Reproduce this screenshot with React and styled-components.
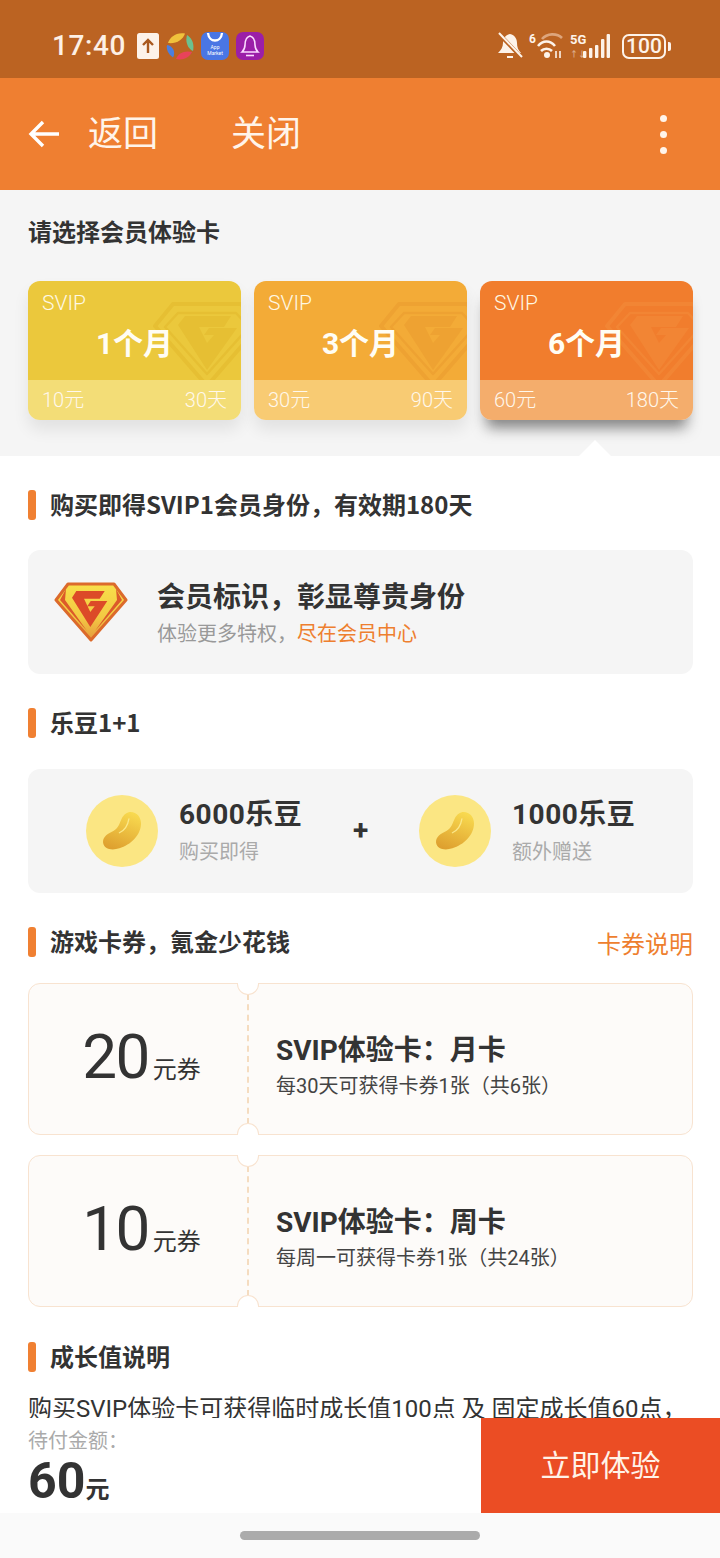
import React from "react";
import styled, { createGlobalStyle } from "styled-components";

const GlobalStyle = createGlobalStyle`
  html, body {
    margin: 0;
    padding: 0;
    background: #fff;
  }
  * {
    box-sizing: border-box;
  }
  body {
    font-family: Roboto, "Noto Sans CJK SC", sans-serif;
  }
`;

const plans = [
  { id: 1, length: "1个月", price: "10元", days: "30天", top: "#ebc83c", bottom: "#f3dd77", mark: "#e6bf33" },
  { id: 3, length: "3个月", price: "30元", days: "90天", top: "#f3ab37", bottom: "#f8cb73", mark: "#eea232" },
  { id: 6, length: "6个月", price: "60元", days: "180天", top: "#f17d2d", bottom: "#f4ad6c", mark: "#f28534", active: true },
];

const beans = [
  { amount: "6000乐豆", note: "购买即得" },
  { amount: "1000乐豆", note: "额外赠送" },
];

const coupons = [
  { value: "20", name: "SVIP体验卡：月卡", desc: "每30天可获得卡券1张（共6张）" },
  { value: "10", name: "SVIP体验卡：周卡", desc: "每周一可获得卡券1张（共24张）" },
];

const GemMark = ({ color }) => (
  <WatermarkSvg viewBox="0 0 108 86" fill="none">
    <path d="M20 2H88L106 24L54 84L2 24Z" stroke={color} strokeWidth="4" strokeLinejoin="round" />
    <path d="M25 11H83L96 25L54 72L12 25Z" stroke={color} strokeWidth="2.5" strokeLinejoin="round" />
    <path d="M32 14H78L71 25H46L54 41L61 33H51L56 26H84L54 68L25 23Z" fill={color} />
  </WatermarkSvg>
);

const GemLogo = () => (
  <svg width="74" height="60" viewBox="0 0 74 60">
    <defs>
      <linearGradient id="gemFill" x1="0" y1="0" x2="0" y2="1">
        <stop offset="0" stopColor="#f8e04a" />
        <stop offset="0.6" stopColor="#f3c843" />
        <stop offset="1" stopColor="#e59a3e" />
      </linearGradient>
    </defs>
    <path d="M14 2H60L72 18L37 58L2 18Z" fill="url(#gemFill)" stroke="#dc6a2b" strokeWidth="3" strokeLinejoin="round" />
    <path d="M12 7L6 18L33 49L11 18Z" fill="#dc5a2a" />
    <path d="M62 7L68 18L41 49L63 18Z" fill="#dc5a2a" />
    <path d="M22.3 9H50.7L45.7 16.7H30L36.3 30L40.7 24.3H33.3L36.7 19H53.3L36.3 45L18 15.7Z" fill="#dc4a28" />
  </svg>
);

const BeanIcon = ({ id }) => (
  <BeanCircle>
    <svg width="38" height="38" viewBox="0 0 44 44">
      <defs>
        <linearGradient id={id} x1="0.7" y1="0" x2="0.3" y2="1">
          <stop offset="0" stopColor="#f8d94f" />
          <stop offset="1" stopColor="#dea02f" />
        </linearGradient>
      </defs>
      <path
        d="M32 0C39 0 44 6 44 13C44 27 32 38 19 42C10 45 1 43 0 35C0 28 6 25 12 22C18 19 19 13 22 7C24 3 28 0 32 0Z"
        fill={`url(#${id})`}
      />
      <path d="M30 8C29 14 26 21 19 24" stroke="#fbe88a" strokeWidth="1.5" fill="none" strokeLinecap="round" />
    </svg>
  </BeanCircle>
);

const StatusLeftIcons = () => (
  <>
    <svg width="22" height="26" viewBox="0 0 22 26">
      <rect width="22" height="26" rx="2.5" fill="#fdf3ea" />
      <path d="M11 20V7M6 12L11 7L16 12" stroke="#a9591f" strokeWidth="2.4" fill="none" />
    </svg>
    <svg width="28" height="28" viewBox="0 0 28 28">
      <path d="M2 11C4 5 10 0 19 1.5C17 8 10 12 2 11Z" fill="#f0c23c" />
      <path d="M21 3C26 6 28.5 12 27 19C22 17 19 10 21 3Z" fill="#6cc08f" />
      <path d="M26 20C23 26 17 28.5 10 27C12 21 19 18 26 20Z" fill="#e8435a" />
      <path d="M7 25.5C2 22 0 17 1 13C7 14 10 20 7 25.5Z" fill="#4a7fe0" />
    </svg>
    <AppTile $color="#4a76e4">
      <svg width="28" height="12" viewBox="0 0 28 12">
        <path d="M7 1C8 11 20 11 21 1" stroke="#fff" strokeWidth="2.4" fill="none" />
      </svg>
      <AppTileText>App</AppTileText>
      <AppTileText>Market</AppTileText>
    </AppTile>
    <svg width="28" height="28" viewBox="0 0 28 28">
      <rect width="28" height="28" rx="7" fill="#9b1fa8" />
      <path
        d="M14 4C10 5 9 9 9 13C9 16 8 18 6 20H22C20 18 19 16 19 13C19 9 18 5 14 4Z"
        stroke="#fbdcff"
        strokeWidth="1.6"
        fill="none"
      />
      <path d="M10 23.5H18" stroke="#fbdcff" strokeWidth="1.6" />
    </svg>
  </>
);

const StatusRightIcons = () => (
  <>
    <svg width="26" height="28" viewBox="0 0 26 28">
      <path d="M13 2C8 3 6 7 6 11C6 15 4 18 1 21H24C21 18 20 15 20 11C20 7 18 3 13 2Z" fill="#fdf3ea" />
      <path d="M10 25H16" stroke="#fdf3ea" strokeWidth="2" />
      <path d="M2 2L25 26" stroke="#bb6322" strokeWidth="4" />
      <path d="M2 1L25 25" stroke="#fdf3ea" strokeWidth="2" />
    </svg>
    <WifiWrap>
      <WifiDigit>6</WifiDigit>
      <svg width="26" height="26" viewBox="0 0 26 26" fill="none">
        <path d="M5 6C10 0 20 0 25 5" stroke="#dda57c" strokeWidth="2.6" />
        <path d="M1 13C6 7 13 7 18 13" stroke="#fdf3ea" strokeWidth="2.6" />
        <path d="M4 18C7 15 12 15 15 18" stroke="#fdf3ea" strokeWidth="2.6" />
        <circle cx="10" cy="22" r="3" fill="#fdf3ea" />
        <path d="M19 18V25M23 18V25" stroke="#fdf3ea" strokeWidth="1.6" />
      </svg>
    </WifiWrap>
    <SignalWrap>
      <SignalLabel>
        <span>5G</span>
        <SignalSmall>↑↓</SignalSmall>
      </SignalLabel>
      <svg width="28" height="26" viewBox="0 0 28 26">
        <rect x="1" y="18" width="3.4" height="7" rx="1" fill="#fdf3ea" />
        <rect x="7" y="15" width="3.4" height="10" rx="1" fill="#fdf3ea" />
        <rect x="13" y="12" width="3.4" height="13" rx="1" fill="#fdf3ea" />
        <rect x="19" y="6" width="3.4" height="19" rx="1" fill="#fdf3ea" />
        <rect x="24.6" y="1" width="3.4" height="24" rx="1" fill="#fdf3ea" />
      </svg>
    </SignalWrap>
    <Battery>
      <BatteryBody>100</BatteryBody>
      <BatteryTip />
    </Battery>
  </>
);

const App = () => {
  return (
    <Page>
      <GlobalStyle />
      <StatusBar>
        <StatusLeft>
          <Clock>17:40</Clock>
          <StatusLeftIcons />
        </StatusLeft>
        <StatusRight>
          <StatusRightIcons />
        </StatusRight>
      </StatusBar>

      <NavBar>
        <BackIcon viewBox="0 0 32 28" fill="none">
          <path d="M31 14H3M15 2L3 14L15 26" stroke="#fff" strokeWidth="3.4" />
        </BackIcon>
        <NavText>返回</NavText>
        <NavText $close>关闭</NavText>
        <MoreDots>
          <i />
          <i />
          <i />
        </MoreDots>
      </NavBar>

      <Scroller>
        <Picker>
          <PickerTitle>请选择会员体验卡</PickerTitle>
          <PlanRow>
            {plans.map((plan) => (
              <PlanCard key={plan.id} $active={plan.active}>
                <PlanTop $color={plan.top}>
                  <GemMark color={plan.mark} />
                  <PlanTag>SVIP</PlanTag>
                  <PlanLength>{plan.length}</PlanLength>
                </PlanTop>
                <PlanBottom $color={plan.bottom}>
                  <span>{plan.price}</span>
                  <span>{plan.days}</span>
                </PlanBottom>
              </PlanCard>
            ))}
          </PlanRow>
          <PickerArrow />
        </Picker>

        <Body>
          <SectionHead $top={34}>
            <SectionTitle>购买即得SVIP1会员身份，有效期180天</SectionTitle>
          </SectionHead>
          <MemberCard>
            <GemLogo />
            <MemberText>
              <MemberTitle>会员标识，彰显尊贵身份</MemberTitle>
              <MemberSub>
                体验更多特权，<em>尽在会员中心</em>
              </MemberSub>
            </MemberText>
          </MemberCard>

          <SectionHead $top={34}>
            <SectionTitle>乐豆1+1</SectionTitle>
          </SectionHead>
          <BeanCard>
            {beans.map((bean, i) => (
              <React.Fragment key={bean.amount}>
                {i > 0 && <Plus>+</Plus>}
                <BeanItem>
                  <BeanIcon id={`bean${i}`} />
                  <BeanText>
                    <BeanAmount>{bean.amount}</BeanAmount>
                    <BeanNote>{bean.note}</BeanNote>
                  </BeanText>
                </BeanItem>
              </React.Fragment>
            ))}
          </BeanCard>

          <SectionHead $top={34} $between>
            <SectionTitle>游戏卡券，氪金少花钱</SectionTitle>
            <CouponHelp>卡券说明</CouponHelp>
          </SectionHead>
          <CouponList>
            {coupons.map((coupon) => (
              <Coupon key={coupon.value}>
                <NotchTop />
                <NotchBottom />
                <CouponValue>
                  <strong>{coupon.value}</strong>
                  <span>元券</span>
                </CouponValue>
                <CouponInfo>
                  <CouponName>{coupon.name}</CouponName>
                  <CouponDesc>{coupon.desc}</CouponDesc>
                </CouponInfo>
              </Coupon>
            ))}
          </CouponList>

          <SectionHead $top={35}>
            <SectionTitle>成长值说明</SectionTitle>
          </SectionHead>
          <GrowthText>购买SVIP体验卡可获得临时成长值100点 及 固定成长值60点，</GrowthText>
        </Body>
      </Scroller>

      <Footer>
        <PriceBox>
          <PriceLabel>待付金额：</PriceLabel>
          <PriceValue>
            60<span>元</span>
          </PriceValue>
        </PriceBox>
        <BuyButton>立即体验</BuyButton>
      </Footer>

      <GestureBar>
        <i />
      </GestureBar>
    </Page>
  );
};

const Page = styled.div`
  width: 720px;
  height: 1558px;
  display: flex;
  flex-direction: column;
  overflow: hidden;
  background: #fff;
`;

const StatusBar = styled.div`
  height: 78px;
  flex: none;
  background: #bb6322;
  display: flex;
  align-items: center;
  justify-content: space-between;
  padding: 14px 49px 0 52px;
`;

const StatusLeft = styled.div`
  display: flex;
  align-items: center;
  gap: 7px;
`;

const Clock = styled.span`
  font-size: 28px;
  line-height: 32px;
  font-weight: 500;
  letter-spacing: 0.6px;
  color: #fdf0e5;
  margin-right: 4px;
`;

const AppTile = styled.div`
  width: 28px;
  height: 28px;
  border-radius: 7px;
  background: ${(p) => p.$color};
  display: flex;
  flex-direction: column;
  align-items: center;
  overflow: hidden;
`;

const AppTileText = styled.span`
  font-size: 5px;
  line-height: 6px;
  color: #fff;
`;

const StatusRight = styled.div`
  display: flex;
  align-items: center;
  color: #fdf3ea;
`;

const WifiWrap = styled.div`
  display: flex;
  margin-left: 6px;
`;

const WifiDigit = styled.span`
  width: 8px;
  font-size: 12px;
  line-height: 13px;
  font-weight: 700;
`;

const SignalWrap = styled.div`
  display: flex;
  margin-left: 7px;
`;

const SignalLabel = styled.div`
  width: 18px;
  height: 26px;
  margin-right: -6px;
  display: flex;
  flex-direction: column;
  justify-content: space-between;
  font-size: 13px;
  line-height: 13px;
  font-weight: 700;
`;

const SignalSmall = styled.span`
  font-size: 8px;
  line-height: 9px;
  opacity: 0.5;
`;

const Battery = styled.div`
  display: flex;
  align-items: center;
  gap: 2px;
  margin-left: 12px;
`;

const BatteryBody = styled.div`
  width: 44px;
  height: 25px;
  border: 2px solid #fdf3ea;
  border-radius: 7px;
  display: flex;
  align-items: center;
  justify-content: center;
  font-size: 21px;
  font-weight: 500;
  line-height: 1;
`;

const BatteryTip = styled.div`
  width: 3px;
  height: 9px;
  border-radius: 0 2px 2px 0;
  background: #fdf3ea;
`;

const NavBar = styled.div`
  height: 112px;
  flex: none;
  background: #ef7f31;
  display: flex;
  align-items: center;
  padding: 0 53px 0 28px;
  color: #fff;
`;

const BackIcon = styled.svg`
  width: 32px;
  height: 28px;
  margin-right: 28px;
`;

const NavText = styled.span`
  font-size: 35px;
  line-height: 40px;
  margin-top: 2px;
  color: #fff4ea;
  margin-left: ${(p) => (p.$close ? "73px" : "0")};
`;

const MoreDots = styled.div`
  margin-left: auto;
  display: flex;
  flex-direction: column;
  gap: 9px;

  i {
    display: block;
    width: 7px;
    height: 7px;
    border-radius: 50%;
    background: #fff4ea;
  }
`;

const Scroller = styled.div`
  flex: 1;
  min-height: 0;
  overflow: hidden;
`;

const Picker = styled.section`
  position: relative;
  height: 266px;
  background: #f5f5f5;
  padding: 26px 27px 0 28px;
  overflow: hidden;
`;

const PickerTitle = styled.h2`
  margin: 0;
  font-size: 24px;
  line-height: 34px;
  font-weight: 700;
  color: #333;
`;

const PlanRow = styled.div`
  display: grid;
  grid-template-columns: repeat(3, 213px);
  gap: 13px;
  margin-top: 31px;
`;

const PlanCard = styled.div`
  height: 139px;
  border-radius: 12px;
  overflow: hidden;
  display: flex;
  flex-direction: column;
  box-shadow: ${(p) =>
    p.$active ? "0 14px 14px -6px rgba(40, 40, 40, 0.55)" : "0 10px 16px rgba(0, 0, 0, 0.08)"};
`;

const PlanTop = styled.div`
  position: relative;
  height: 99px;
  background: ${(p) => p.$color};
  color: #fff;
  overflow: hidden;
`;

const WatermarkSvg = styled.svg`
  position: absolute;
  right: -20px;
  top: 21px;
  width: 108px;
  height: 86px;
`;

const PlanTag = styled.div`
  position: relative;
  padding: 8px 0 0 14px;
  font-size: 21px;
  line-height: 28px;
  font-weight: 300;
  color: #fff8e4;
`;

const PlanLength = styled.div`
  position: relative;
  text-align: center;
  margin-top: 5px;
  font-size: 30px;
  line-height: 44px;
  font-weight: 700;
  color: #fffdf4;
`;

const PlanBottom = styled.div`
  flex: 1;
  background: ${(p) => p.$color};
  display: flex;
  align-items: center;
  justify-content: space-between;
  padding: 0 14px;
  font-size: 20px;
  line-height: 28px;
  font-weight: 300;
  color: #fff8ec;
`;

const PickerArrow = styled.div`
  position: absolute;
  left: 579px;
  bottom: 0;
  width: 0;
  height: 0;
  border-left: 16px solid transparent;
  border-right: 16px solid transparent;
  border-bottom: 16px solid #fff;
`;

const Body = styled.div`
  padding: 0 27px 0 28px;
`;

const SectionHead = styled.div`
  display: flex;
  align-items: center;
  justify-content: ${(p) => (p.$between ? "space-between" : "flex-start")};
  height: 30px;
  margin-top: ${(p) => p.$top}px;
`;

const SectionTitle = styled.h3`
  margin: 0;
  padding: 0 0 2px 22px;
  position: relative;
  font-family: "Noto Sans CJK SC", sans-serif;
  font-size: 24px;
  line-height: 28px;
  font-weight: 700;
  color: #333;

  &::before {
    content: "";
    position: absolute;
    left: 0;
    top: 0;
    width: 8px;
    height: 30px;
    border-radius: 3px;
    background: #f08032;
  }
`;

const CouponHelp = styled.span`
  font-size: 24px;
  line-height: 30px;
  margin-top: 6px;
  color: #ee7f2f;
`;

const MemberCard = styled.div`
  height: 124px;
  margin-top: 30px;
  border-radius: 12px;
  background: #f5f5f5;
  display: flex;
  align-items: center;
  gap: 29px;
  padding-left: 26px;
`;

const MemberText = styled.div`
  padding-top: 6px;
`;

const MemberTitle = styled.div`
  font-size: 28px;
  line-height: 38px;
  font-weight: 700;
  color: #333;
`;

const MemberSub = styled.div`
  font-size: 20px;
  line-height: 34px;
  color: #999;

  em {
    font-style: normal;
    color: #ee7f2f;
  }
`;

const BeanCard = styled.div`
  height: 124px;
  margin-top: 31px;
  border-radius: 12px;
  background: #f5f5f5;
  display: grid;
  grid-template-columns: 273px 60px 1fr;
  align-items: center;
  padding-left: 58px;
`;

const BeanItem = styled.div`
  display: flex;
  align-items: center;
  gap: 21px;
`;

const BeanText = styled.div`
  padding-top: 2px;
`;

const BeanCircle = styled.div`
  width: 72px;
  height: 72px;
  flex: none;
  border-radius: 50%;
  background: #fbe683;
  display: flex;
  align-items: center;
  justify-content: center;
`;

const BeanAmount = styled.div`
  font-size: 28px;
  line-height: 38px;
  font-weight: 700;
  letter-spacing: 0.5px;
  color: #333;
`;

const BeanNote = styled.div`
  font-size: 20px;
  line-height: 34px;
  margin-top: 1px;
  color: #aaa;
`;

const Plus = styled.div`
  font-size: 28px;
  line-height: 1;
  font-weight: 700;
  color: #333;
  margin-left: -6px;
`;

const CouponList = styled.div`
  display: flex;
  flex-direction: column;
  gap: 20px;
  margin-top: 26px;
`;

const Coupon = styled.div`
  position: relative;
  height: 152px;
  border: 1px solid #f8e3d0;
  border-radius: 12px;
  background: #fdfbf9;
  display: grid;
  grid-template-columns: 219px 1fr;

  &::after {
    content: "";
    position: absolute;
    left: 218px;
    top: 10px;
    bottom: 10px;
    border-left: 2px dashed #f5dcc0;
  }
`;

const Notch = styled.div`
  position: absolute;
  z-index: 1;
  left: 208px;
  width: 22px;
  height: 12px;
  background: #fff;
  border: 1px solid #f8e3d0;
`;

const NotchTop = styled(Notch)`
  top: -1px;
  border-top: none;
  border-radius: 0 0 11px 11px;
`;

const NotchBottom = styled(Notch)`
  bottom: -1px;
  border-bottom: none;
  border-radius: 11px 11px 0 0;
`;

const CouponValue = styled.div`
  display: flex;
  align-items: baseline;
  justify-content: center;
  padding: 35px 0 0 6px;
  color: #333;
  gap: 4px;

  strong {
    font-size: 62px;
    line-height: 76px;
    font-weight: 400;
    letter-spacing: -1.5px;
  }

  span {
    font-size: 24px;
  }
`;

const CouponInfo = styled.div`
  padding: 48px 0 0 28px;
`;

const CouponName = styled.div`
  font-size: 28px;
  line-height: 38px;
  font-weight: 700;
  color: #333;
`;

const CouponDesc = styled.div`
  font-size: 20px;
  line-height: 32px;
  color: #444;
`;

const GrowthText = styled.p`
  margin: 19px 0 0;
  font-size: 24px;
  line-height: 36px;
  color: #333;
  white-space: nowrap;
`;

const Footer = styled.div`
  height: 95px;
  flex: none;
  background: #fff;
  display: flex;
  justify-content: space-between;
`;

const PriceBox = styled.div`
  padding: 8px 0 0 28px;
`;

const PriceLabel = styled.div`
  font-size: 20px;
  line-height: 30px;
  color: #aaa;
`;

const PriceValue = styled.div`
  font-size: 50px;
  line-height: 50px;
  font-weight: 700;
  color: #333;

  span {
    font-size: 24px;
  }
`;

const BuyButton = styled.div`
  width: 239px;
  background: #eb4d24;
  color: #fff3e8;
  font-size: 30px;
  line-height: 36px;
  display: flex;
  align-items: center;
  justify-content: center;
`;

const GestureBar = styled.div`
  height: 45px;
  flex: none;
  background: #fafafa;
  display: flex;
  justify-content: center;
  padding-top: 18px;

  i {
    display: block;
    width: 240px;
    height: 9px;
    border-radius: 5px;
    background: #ababab;
  }
`;

export default App;
